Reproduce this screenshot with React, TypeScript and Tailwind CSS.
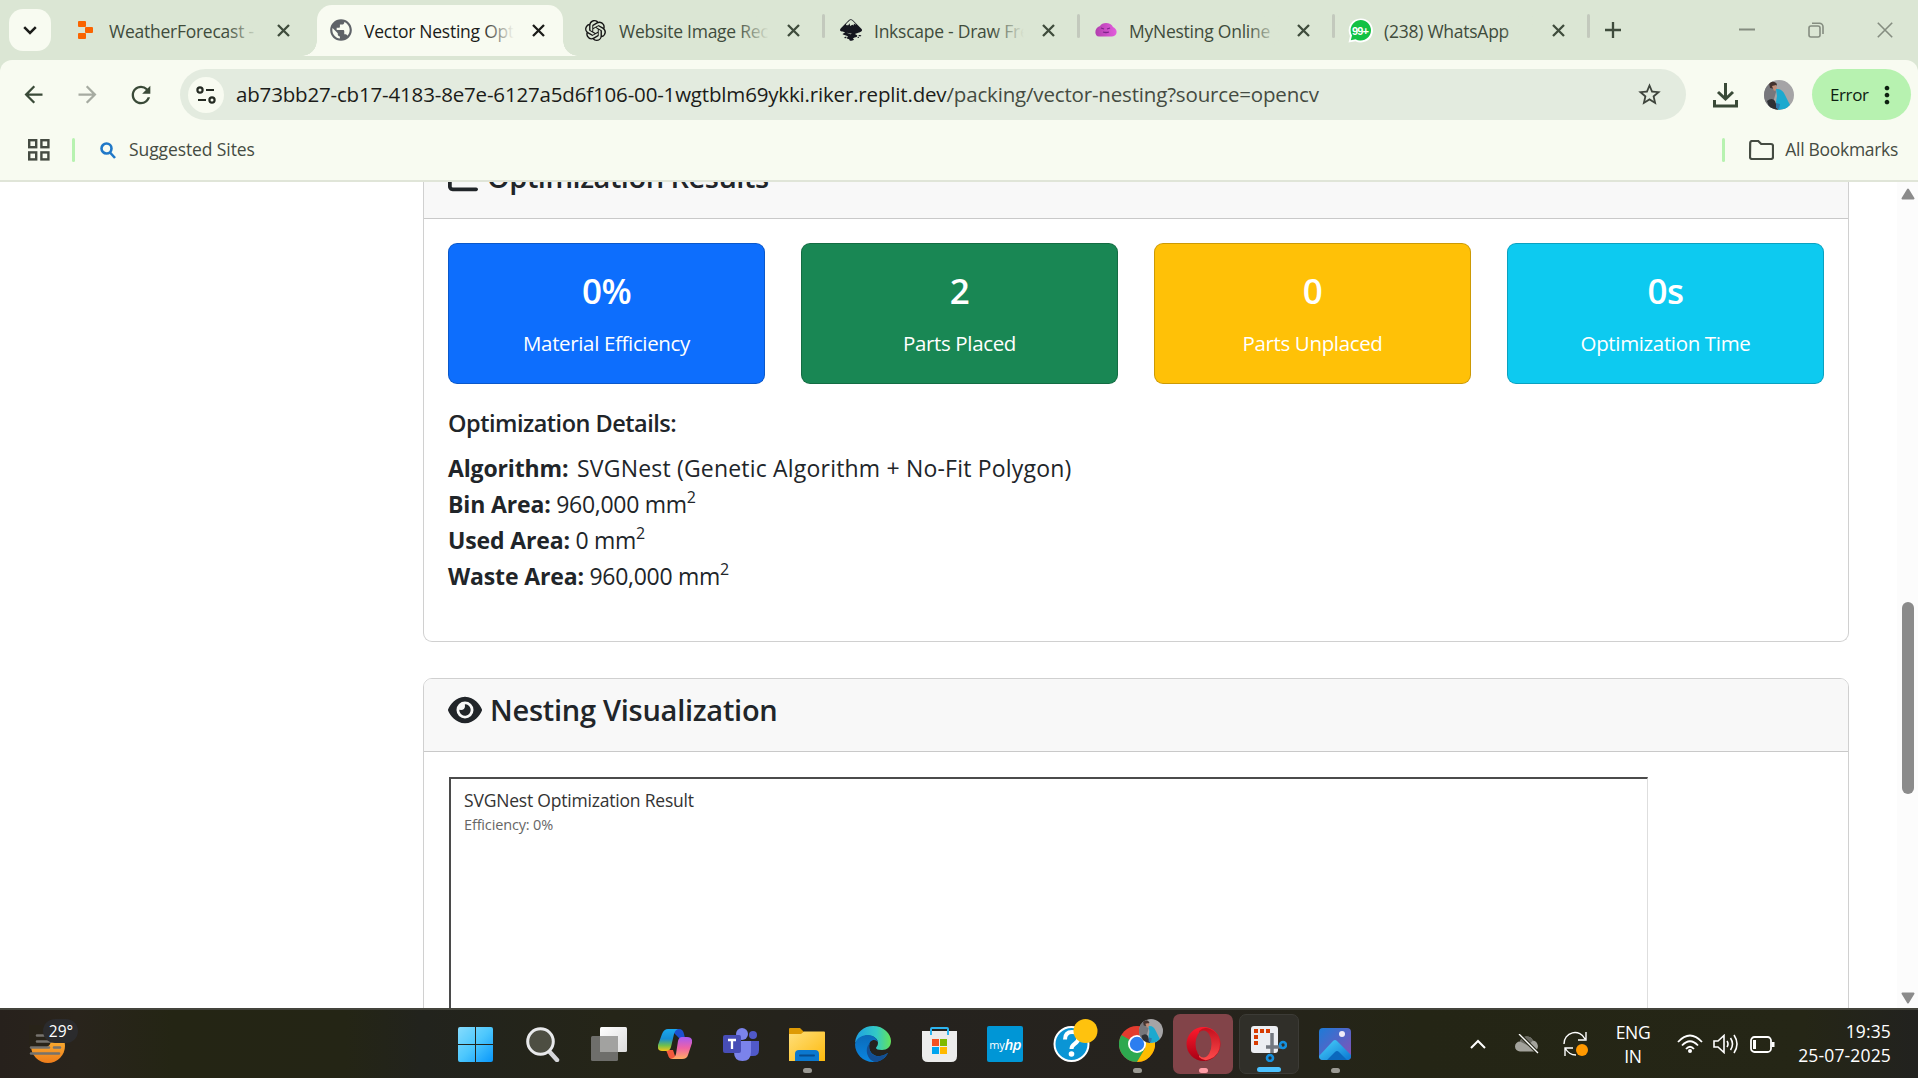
import React from "react";
import {
  MdArrowBack, MdArrowForward, MdRefresh, MdPublic, MdStarBorder, MdMoreVert,
} from "react-icons/md";
import { SiOpenai, SiInkscape } from "react-icons/si";
import { FaEye, FaChartLine } from "react-icons/fa6";

type Kids = { children?: React.ReactNode };

const Fade = ({ children, on }: Kids & { on: string }) => (
  <span className="relative ml-[12px] mt-[2px] block w-[150px] overflow-hidden whitespace-nowrap text-[17.5px] leading-[30px] tracking-[-0.25px]">
    {children}
    <span className={"absolute inset-y-0 right-0 w-[32px] bg-gradient-to-r from-transparent " + on} />
  </span>
);

function Tab({ icon, title, active, sep }: { icon: React.ReactNode; title: string; active?: boolean; sep?: boolean }) {
  return (
    <div className={"relative flex h-[51px] w-[255px] shrink-0 items-center pl-[21px] " + (active ? "text-[#1b1c19]" : "text-[#3f4c3c]")}>
      {active && (
        <>
          <span className="absolute inset-y-0 left-[9px] w-[246px] rounded-t-[15px] bg-[#f8fbf1]" />
          <span className="absolute bottom-0 left-[-6px] h-[15px] w-[15px] bg-[radial-gradient(circle_at_0_0,#dbe6d4_14.5px,#f8fbf1_15px)]" />
          <span className="absolute bottom-0 left-[255px] h-[15px] w-[15px] bg-[radial-gradient(circle_at_100%_0,#dbe6d4_14.5px,#f8fbf1_15px)]" />
        </>
      )}
      <span className="relative flex h-6 w-[23px] items-center justify-center">{icon}</span>
      <Fade on={active ? "to-[#f8fbf1]" : "to-[#dbe6d4]"}>{title}</Fade>
      <svg className="relative ml-[18px] shrink-0" width="13" height="13" viewBox="0 0 13 13"><path d="M1 1l11 11M12 1L1 12" stroke="currentColor" strokeWidth="2.300" /></svg>
      {sep && <span className="absolute left-[259px] top-[9px] h-6 w-[3px] rounded bg-[#c3c9bd]" />}
    </div>
  );
}

const Replit = () => (
  <svg width="16" height="18" viewBox="0 0 16 18" fill="#fa6400">
    <rect x="0" y="0" width="8" height="6" rx="1" /><rect x="7" y="6" width="8" height="6" rx="1" /><rect x="0" y="12" width="8" height="6" rx="1" />
  </svg>
);
const Blob = () => (
  <svg width="22" height="14" viewBox="0 0 22 14">
    <defs><linearGradient id="blob"><stop offset="0" stopColor="#b23fae" /><stop offset="1" stopColor="#e35ddd" /></linearGradient></defs>
    <path d="M5 3C7-1 16-1 18 4C23 6 23 13 17 13.500H4C-1 13-1 5 5 3Z" fill="url(#blob)" />
    <path d="M6 5l3 1M15 5l-3 1M8 9q3 1 6 0" stroke="#7d2589" strokeWidth="1.300" fill="none" />
  </svg>
);
const WhatsApp = () => (
  <svg width="25" height="25" viewBox="0 0 25 25" className="shrink-0">
    <path d="M12.500 .5a12 12 0 1 1-5 22.700L.5 24.500 2 18A12 12 0 0 1 12.500 .5Z" fill="#fff" />
    <path d="M12.500 2a10.300 10.300 0 1 1-5 19.200L2.800 22.200 4 17.500A10.300 10.300 0 0 1 12.500 2Z" fill="#12c143" />
    <text x="12.500" y="16.500" fontSize="11" fontWeight="700" fill="#fff" textAnchor="middle" fontFamily="Liberation Sans, sans-serif" textLength="17">99+</text>
  </svg>
);

const Portrait = ({ size, id }: { size: number; id: string }) => (
  <svg width={size} height={size} viewBox="0 0 30 30">
    <defs><clipPath id={id}><circle cx="15" cy="15" r="15" /></clipPath></defs>
    <g clipPath={"url(#" + id + ")"}>
      <rect width="30" height="30" fill="#a5a4a6" />
      <path d="M0 0h8l4 12-5 18H0Z" fill="#77777c" />
      <path d="M5 3q5-3 8 1l-2 5-5-1Z" fill="#44332f" /><path d="M8 6l4-1 1 4-3 2Z" fill="#c18f79" />
      <path d="M12 9q6-1 9 6l5 10-4 4-8 1-2-8 1-6Z" fill="#1ba9cf" />
      <path d="M3 21q5-4 8 0l3 9H6Z" fill="#2f3035" /><path d="M12 23l4 1-1 5-3-1Z" fill="#3177aa" />
    </g>
  </svg>
);

function Browser() {
  return (
    <header className="shrink-0 bg-[#dbe6d4]">
      <div className="flex h-[60px] items-start pt-[9px]">
        <div className="ml-[9px] mr-[2px] flex h-[42px] w-[42px] shrink-0 items-center justify-center rounded-[14px] bg-[#f8fbf1] text-[#1b1c19]">
          <svg width="14" height="9" viewBox="0 0 14 9" fill="none" stroke="currentColor" strokeWidth="2.500"><path d="M1.200 1.200L7 7l5.800-5.800" /></svg>
        </div>
        <div className="flex h-[42px] items-center">
          <div className="flex pt-0">
            <Tab icon={<Replit />} title="WeatherForecast - R" />
            <Tab active icon={<MdPublic size={26} color="#5f6368" className="shrink-0" />} title="Vector Nesting Optimizer" />
            <Tab sep icon={<SiOpenai size={21} color="#151515" />} title="Website Image Recreation" />
            <Tab sep icon={<SiInkscape size={22} color="#15161f" />} title="Inkscape - Draw Freely" />
            <Tab sep icon={<Blob />} title="MyNesting Online" />
            <Tab sep icon={<WhatsApp />} title="(238) WhatsApp" />
          </div>
          <svg className="ml-[22px] text-[#3f4c3c]" width="16" height="16" viewBox="0 0 16 16"><path d="M8 0v16M0 8h16" stroke="currentColor" strokeWidth="2.300" /></svg>
        </div>
        <div className="ml-auto mr-[25px] flex h-[42px] w-[154px] items-center justify-between text-[#858d80]">
          <svg width="16" height="16" viewBox="0 0 16 16"><path d="M0 7.500h16" stroke="currentColor" strokeWidth="2" /></svg>
          <svg width="16" height="16" viewBox="0 0 16 16" fill="none" stroke="currentColor" strokeWidth="1.600"><rect x="1" y="4" width="11" height="11" rx="2" /><path d="M4 1.200h7.500a3.500 3.500 0 0 1 3.500 3.500v7.300" /></svg>
          <svg width="16" height="16" viewBox="0 0 16 16" stroke="currentColor" strokeWidth="1.600"><path d="M.8.8l14.400 14.400M15.200.8L.8 15.200" /></svg>
        </div>
      </div>
      <div className="flex h-[60px] items-center rounded-t-[12px] bg-[#f8fbf1] pt-[9px] text-[#3a4a38]">
        <MdArrowBack size={27} className="ml-[20px]" />
        <MdArrowForward size={27} className="ml-[27px] text-[#a6aba1]" />
        <MdRefresh size={28} className="ml-[26px]" />
        <div className="ml-[25px] flex h-[51px] w-[1506px] items-center rounded-full bg-[#e3ebdf] pl-[8px] pr-[23px]">
          <div className="flex h-[36px] w-[36px] items-center justify-center rounded-full bg-[#f8fbf1]">
            <svg width="20" height="18" viewBox="0 0 20 18" fill="none" stroke="#252b23" strokeWidth="2.200"><circle cx="4" cy="4" r="2.600" /><path d="M10 4h8M2 14h8" /><circle cx="16" cy="14" r="2.600" /></svg>
          </div>
          <span className="mb-[2px] ml-[12px] whitespace-nowrap text-[20.5px] leading-[30px] tracking-[-0.17px] text-[#1b1c19]">ab73bb27-cb17-4183-8e7e-6127a5d6f106-00-1wgtblm69ykki.riker.replit.dev<span className="text-[#454b42]">/packing/vector-nesting?source=opencv</span></span>
          <MdStarBorder size={27} className="ml-auto text-[#3f453d]" />
        </div>
        <svg className="ml-[27px]" width="25" height="26" viewBox="0 0 25 26" fill="none" stroke="currentColor" strokeWidth="3"><path d="M12.500 1v16M5 10l7.500 7 7.500-7M1.500 18v6h22v-6" /></svg>
        <div className="ml-[26px]"><Portrait size={30} id="p1" /></div>
        <div className="ml-[18px] flex h-[51px] w-[99px] items-center rounded-full bg-[#b7f2b0] pl-[18px] text-[#0d2010]">
          <span className="w-[43px] text-[17px] tracking-[-0.4px]">Error</span>
          <MdMoreVert size={28} />
        </div>
      </div>
      <div className="flex h-[62px] items-center border-b-2 border-[#e0e5d8] bg-[#f8fbf1] text-[17.5px] leading-[24px] tracking-[-0.2px] text-[#454b42]">
        <svg className="ml-[28px]" width="22" height="22" viewBox="0 0 22 22" fill="none" stroke="#454b42" strokeWidth="2.400"><rect x="1.200" y="1.200" width="7" height="7" /><rect x="13.400" y="1.200" width="7" height="7" /><rect x="1.200" y="13.400" width="7" height="7" /><rect x="13.400" y="13.400" width="7" height="7" /></svg>
        <span className="ml-[22px] h-6 w-[3px] rounded bg-[#b7f2b0]" />
        <svg className="ml-[25px]" width="16" height="17" viewBox="0 0 16 17" fill="none" stroke="#2078c8" strokeWidth="2.600"><circle cx="6.500" cy="6.500" r="5" /><path d="M10 10.500l5 5.500" /></svg>
        <span className="mb-[2px] ml-[13px] tracking-[-0.1px]">Suggested Sites</span>
        <span className="ml-auto h-6 w-[3px] rounded bg-[#b7f2b0]" />
        <svg className="ml-[24px]" width="25" height="20" viewBox="0 0 25 20" fill="none" stroke="#454b42" strokeWidth="2.200"><path d="M1.200 3a2 2 0 0 1 2-2h6l3 3H22a2 2 0 0 1 2 2v11a2 2 0 0 1-2 2H3a2 2 0 0 1-2-2Z" /></svg>
        <span className="mb-[2px] ml-[11px] mr-[20px] tracking-[-0.3px]">All Bookmarks</span>
      </div>
    </header>
  );
}

function Stat({ value, label, tone }: { value: string; label: string; tone: string }) {
  return (
    <div className={"flex h-[141px] flex-col items-center rounded-[9px] border border-black/20 pt-[23px] text-white " + tone}>
      <div className="text-[35px] font-semibold leading-[48px] tracking-[-0.5px]">{value}</div>
      <div className="mt-[12px] text-[20.500px] leading-[32px] tracking-[-0.35px]">{label}</div>
    </div>
  );
}

const Detail = ({ name, children }: Kids & { name: string }) => (
  <div className="h-9 whitespace-nowrap"><strong className="font-bold tracking-[-0.15px]">{name}</strong> {children}</div>
);
const Sq = () => <sup className="relative top-[-0.6em] align-baseline text-[16px] leading-none">2</sup>;

function Page() {
  return (
    <main className="flex min-h-0 flex-1 bg-white text-[#212529]">
      <div className="ml-[423px] w-[1426px] shrink-0 overflow-hidden">
        <section className="h-[460px] rounded-b-[9px] border border-t-0 border-[#d0d0d0]">
          <div className="flex h-[37px] items-end border-b border-[#c9c9c9] bg-[#f8f8f8] pl-[24px]">
            <div className="flex h-[59px] shrink-0 items-start">
              <FaChartLine size={30} className="mt-[4px]" />
              <h5 className="ml-[9px] text-[29px] font-semibold leading-[36px] tracking-[-0.5px]">Optimization Results</h5>
            </div>
          </div>
          <div className="px-[24px] pt-[24px]">
            <div className="grid grid-cols-4 gap-[36px]">
              <Stat value="0%" label="Material Efficiency" tone="bg-[#0d6efd]" />
              <Stat value="2" label="Parts Placed" tone="bg-[#198754]" />
              <Stat value="0" label="Parts Unplaced" tone="bg-[#ffc107]" />
              <Stat value="0s" label="Optimization Time" tone="bg-[#0dcaf0]" />
            </div>
            <h6 className="mt-[24px] text-[23.500px] font-semibold leading-[30px] tracking-[-0.5px]">Optimization Details:</h6>
            <div className="mt-[12px] text-[23px] leading-[36px] tracking-[-0.3px]">
              <Detail name="Algorithm:"><span className="ml-[3px] tracking-[0.19px]">SVGNest (Genetic Algorithm + No-Fit Polygon)</span></Detail>
              <Detail name="Bin Area:">960,000 mm<Sq /></Detail>
              <Detail name="Used Area:">0 mm<Sq /></Detail>
              <Detail name="Waste Area:">960,000 mm<Sq /></Detail>
            </div>
          </div>
        </section>
        <section className="mt-[36px] h-[500px] overflow-hidden rounded-t-[9px] border border-[#d0d0d0]">
          <div className="flex h-[73px] items-start border-b border-[#c9c9c9] bg-[#f8f8f8] pl-[24px] pt-[12px]">
            <FaEye size={34} className="mt-[2px]" />
            <h5 className="ml-[8px] mt-[1px] text-[29px] font-semibold leading-[36px] tracking-[-0.27px]">Nesting Visualization</h5>
          </div>
          <div className="ml-[25px] mt-[25px] h-[420px] w-[1199px] border-l-2 border-r border-t-2 border-l-[#4b4b4b] border-r-[#dedede] border-t-[#4b4b4b] pl-[13px] pt-[8px]">
            <p className="text-[17.500px] leading-[26px] tracking-[-0.2px] text-[#333]">SVGNest Optimization Result</p>
            <p className="text-[14.500px] leading-[23px] tracking-[-0.15px] text-[#666]">Efficiency: 0%</p>
          </div>
        </section>
      </div>
      <div className="ml-auto flex w-[21px] flex-col items-center bg-[#fcfcfc] pl-[1px]">
        <svg className="mt-[6px]" width="14" height="12" viewBox="0 0 14 12"><path d="M7 1.500L12.500 10.500H1.500Z" fill="#8b8b8b" stroke="#8b8b8b" strokeWidth="2" strokeLinejoin="round" /></svg>
        <span className="mt-[402px] h-[192px] w-[12px] rounded-full bg-[#8b8b8b]" />
        <svg className="mb-[4px] mt-auto" width="14" height="12" viewBox="0 0 14 12"><path d="M7 10.500L12.500 1.500H1.500Z" fill="#8b8b8b" stroke="#8b8b8b" strokeWidth="2" strokeLinejoin="round" /></svg>
      </div>
    </main>
  );
}

function AppButton({ children, box, mark }: Kids & { box?: string; mark?: string }) {
  return (
    <div className={"relative flex h-[60px] w-[60px] shrink-0 items-center justify-center rounded-[7px] " + (box ?? "")}>
      {children}
      {mark && <span className={"absolute bottom-[1px] h-[5px] rounded-full " + mark} />}
    </div>
  );
}

function Taskbar() {
  const dot = "w-[9px] bg-[#9b9a94]";
  return (
    <footer className="flex h-[70px] shrink-0 items-center border-t-2 border-[#44443c] bg-[linear-gradient(90deg,#27211c_0%,#29241c_4%,#242514_9%,#242515_18%,#22231d_22%,#252518_32%,#25221e_45%,#26231e_62%,#242515_74%,#252616_94%,#22221f_100%)] text-white">
      <svg className="ml-[26px] shrink-0" width="58" height="50" viewBox="0 0 58 50">
        <defs><linearGradient id="sun" x2="0" y2="1"><stop offset="0" stopColor="#ffc43c" /><stop offset="1" stopColor="#ee7d1b" /></linearGradient></defs>
        <circle cx="22" cy="27" r="17" fill="url(#sun)" />
        <path d="M3 6h36v17H25q-2 6-9 6l-13-1Z" fill="#282319" />
        <path d="M11 16.500h7M11 22.500h14M5 28.500h18M28 28.500h6M5 34.500h28" stroke="#76736e" strokeWidth="2.600" strokeLinecap="round" />
        <rect x="17" y="0" width="35" height="24" rx="12" fill="#2b2b2d" />
        <text x="35" y="17.500" fontSize="15.500" fill="#fff" textAnchor="middle">29°</text>
      </svg>
      <div className="ml-[361px] flex gap-[6px]">
        <div className="mr-[2px]">
          <AppButton>
            <svg width="35" height="35" viewBox="0 0 35 35"><defs><linearGradient id="win" x2="1" y2="1"><stop offset="0" stopColor="#86dcfd" /><stop offset=".5" stopColor="#4cc7fd" /><stop offset="1" stopColor="#0997fa" /></linearGradient></defs><path fill="url(#win)" d="M2 0h15v17H0V2q0-2 2-2ZM18 0h15q2 0 2 2v15H18ZM0 18h17v17H2q-2 0-2-2ZM18 18h17v15q0 2-2 2H18Z" /></svg>
          </AppButton>
        </div>
        <AppButton>
          <svg width="34" height="35" viewBox="0 0 34 35"><path d="M22 23l9 10" stroke="#d5d6da" strokeWidth="4.500" strokeLinecap="round" /><circle cx="14.500" cy="14.500" r="12.800" fill="#4d4e42" stroke="#e8e9eb" strokeWidth="3" /></svg>
        </AppButton>
        <AppButton>
          <svg width="36" height="34" viewBox="0 0 36 34"><defs><linearGradient id="tv" x2="1" y2="1"><stop offset="0" stopColor="#fff" /><stop offset="1" stopColor="#dcdcdc" /></linearGradient></defs><rect x="9" y="0" width="27" height="25" rx="1.500" fill="url(#tv)" /><rect x="0" y="9" width="27" height="25" rx="1.500" fill="#6e6e6b" /><path d="M9 9h18v16H9Z" fill="#a2a2a0" /></svg>
        </AppButton>
        <AppButton>
          <svg width="34" height="31" viewBox="0 0 34 31">
            <defs>
              <linearGradient id="c1" x2="0" y2="1"><stop offset="0" stopColor="#18a8f0" /><stop offset=".45" stopColor="#168ed4" /><stop offset=".75" stopColor="#70bf4d" /><stop offset="1" stopColor="#f5c51a" /></linearGradient>
              <linearGradient id="c2" x2="0" y2="1"><stop offset="0" stopColor="#a85af4" /><stop offset=".5" stopColor="#ef62a5" /><stop offset="1" stopColor="#ffac62" /></linearGradient>
            </defs>
            <path d="M10 0h11q4 0 5 5l1 4h-6L16 4Z" fill="#1c4fd0" /><path d="M8 21h7l3 9h-4q-3 0-4-4Z" fill="#f25a3d" />
            <path d="M10 0h10q-3 1-4 5l-3 13q-1 4-5 4H4q-5 0-4-6L4 5Q6 0 10 0Z" fill="url(#c1)" />
            <path d="M24 8h5q6 0 5 6l-4 12q-1 4-6 4H13q4-1 5-5l2-13q1-4 4-4Z" fill="url(#c2)" />
          </svg>
        </AppButton>
        <AppButton>
          <svg width="36" height="33" viewBox="0 0 36 33"><circle cx="30" cy="7" r="4" fill="#5059c9" /><path d="M26 13h10v9q0 6-6 6h-4Z" fill="#5059c9" /><circle cx="19" cy="6" r="6" fill="#7b83eb" /><path d="M11 13h17v11q0 9-8.500 9T11 24Z" fill="#7b83eb" /><rect x="0" y="7" width="18" height="18" rx="2" fill="#474db6" /><path d="M5 12h8M9 12v9" stroke="#fff" strokeWidth="2.300" /></svg>
        </AppButton>
        <AppButton mark={dot}>
          <svg width="36" height="33" viewBox="0 0 36 33"><defs><linearGradient id="fo" x2="1" y2="1"><stop offset="0" stopColor="#ffdf7b" /><stop offset="1" stopColor="#fdba0d" /></linearGradient></defs><path d="M0 1q0-1 1-1h10l4 4v4H0Z" fill="#de9a05" /><path d="M0 6h12l3-2.500h20q1 0 1 1V33H0Z" fill="url(#fo)" /><path d="M6 33v-7q0-4 4-4h16q4 0 4 4v7Z" fill="#0b78cf" /><path d="M11 27.500h14" stroke="#074c8e" strokeWidth="2" strokeLinecap="round" /></svg>
        </AppButton>
        <AppButton>
          <svg width="36" height="36" viewBox="0 0 36 36">
            <defs><linearGradient id="e1"><stop offset="0" stopColor="#1d9fe4" /><stop offset=".6" stopColor="#33c9c5" /><stop offset="1" stopColor="#64e35a" /></linearGradient><linearGradient id="e2" x2="0" y2="1"><stop offset="0" stopColor="#0b6ab9" /><stop offset="1" stopColor="#0a86e0" /></linearGradient></defs>
            <path d="M0 17C1 6 9 0 18 0c11 0 18 8 18 15 0 6-4 9-9 9-4 0-6-1-6-2 0-1 2-2 2-5C23 9 8 5 0 17Z" fill="url(#e1)" />
            <path d="M0 18C2 11 8 9 13 9c6 0 9 4 10 7-3-4-9-2-9 4 0 7 6 11 11 10 4 0 7-3 8-3C30 33 24 36 18 36 8 36 0 28 0 18Z" fill="url(#e2)" />
            <path d="M15 17c-3 9 4 14 10 13 4 0 7-3 8-3-4 7-10 9-13 9-8-2-11-14-5-19Z" fill="#134e93" />
          </svg>
        </AppButton>
        <AppButton>
          <svg width="35" height="35" viewBox="0 0 35 35"><path d="M0 4h35v25q0 6-6 6H6q-6 0-6-6Z" fill="#ececec" /><path d="M9 8V2q0-1 1-1h15q1 0 1 1v6" fill="none" stroke="#2db4ef" strokeWidth="2" /><path d="M10 12h7v7h-7Z" fill="#f25022" /><path d="M18 12h7v7h-7Z" fill="#7fba00" /><path d="M10 20h7v7h-7Z" fill="#00a4ef" /><path d="M18 20h7v7h-7Z" fill="#ffb900" /></svg>
        </AppButton>
        <AppButton>
          <div className="flex h-[36px] w-[36px] items-center justify-center rounded-[2px] bg-[#0096d6] text-[11px] leading-none tracking-[-0.2px]">my<span className="text-[15px] font-semibold italic tracking-[-0.8px]">hp</span></div>
        </AppButton>
        <AppButton>
          <svg className="-mt-[7px] ml-[8px]" width="45" height="44" viewBox="0 0 45 44"><circle cx="18.500" cy="25" r="17" fill="#0a95d5" stroke="#fff" strokeWidth="2" /><path d="M12 20.500q0-7.500 7-7.500t6.500 6q0 3.500-4 6-3 2-3 5" stroke="#fff" strokeWidth="4" fill="none" /><circle cx="18.500" cy="35" r="2.800" fill="#fff" /><circle cx="32.500" cy="12" r="12" fill="#ffc20e" /></svg>
        </AppButton>
        <AppButton mark={dot}>
          <svg width="36" height="36" viewBox="0 0 36 36"><circle cx="18" cy="18" r="18" fill="#e33b2e" /><path d="M18 18L2.400 9A18 18 0 0 0 18 36l8-13Z" fill="#2da94f" /><path d="M18 36l8-13.500L24 9h9.600A18 18 0 0 1 18 36Z" fill="#fdbd00" /><circle cx="18" cy="18" r="9" fill="#fff" /><circle cx="18" cy="18" r="7.200" fill="#2c7ef0" /></svg>
          <span className="absolute right-[4px] top-[5px]"><Portrait size={24} id="p2" /></span>
        </AppButton>
        <AppButton box="bg-[#824449]" mark="w-[9px] bg-[#ff9da6]">
          <svg width="35" height="34" viewBox="0 0 35 34"><defs><linearGradient id="op" x2="0" y2="1"><stop offset="0" stopColor="#ff1b2d" /><stop offset="1" stopColor="#a70014" /></linearGradient><linearGradient id="op2" x2="0" y2="1"><stop offset="0" stopColor="#c3101e" /><stop offset="1" stopColor="#ff4b4b" /></linearGradient></defs><ellipse cx="17.500" cy="17" rx="17" ry="17" fill="url(#op)" /><path d="M13 4q5-5 11-2 10 4 10 15T24 32q-6 3-11-2Z" fill="url(#op2)" /><ellipse cx="17.500" cy="17" rx="8" ry="13.500" fill="#824449" /></svg>
        </AppButton>
        <AppButton box="border border-[#3c3b36] bg-[#302f29]" mark="w-[24px] bg-[#4cc2ff]">
          <svg width="36" height="36" viewBox="0 0 36 36"><rect x="0" y="0" width="27" height="27" rx="3" fill="#eceef2" /><path d="M5 19V5h14" fill="none" stroke="#d83b01" strokeWidth="4" strokeDasharray="4 2" /><path d="M21 7v20M15 21h16" stroke="#737880" strokeWidth="3.500" /><circle cx="32" cy="19" r="3" fill="none" stroke="#1490df" strokeWidth="2.600" /><circle cx="19" cy="32" r="3" fill="none" stroke="#1490df" strokeWidth="2.600" /></svg>
        </AppButton>
        <AppButton mark={dot}>
          <svg width="32" height="32" viewBox="0 0 32 32"><defs><linearGradient id="ph" x2="1" y2="1"><stop offset="0" stopColor="#1c7bd8" /><stop offset="1" stopColor="#8a4fb5" /></linearGradient><linearGradient id="ph2" x2="1" y2="1"><stop offset="0" stopColor="#4bd3fc" /><stop offset="1" stopColor="#0a77d2" /></linearGradient><clipPath id="phc"><rect width="32" height="32" rx="4" /></clipPath></defs><g clipPath="url(#phc)"><rect width="32" height="32" fill="url(#ph)" /><path d="M0 28L14 13q2-2 4 0l14 14v5H0Z" fill="url(#ph2)" /><path d="M8 32l8-8q2-2 4 0l8 8Z" fill="#0b68bd" /></g><circle cx="23" cy="6" r="3" fill="#f0ecf8" /></svg>
        </AppButton>
      </div>
      <div className="ml-auto flex shrink-0 items-center pr-[27px] text-[17.5px] leading-[24px]">
        <svg width="16" height="10" viewBox="0 0 16 10" fill="none" stroke="#fff" strokeWidth="2"><path d="M1 9l7-7 7 7" /></svg>
        <svg className="ml-[29px]" width="25" height="20" viewBox="0 0 25 20"><path d="M5 17.500a5 5 0 0 1 0-10 7 7 0 0 1 13-1 6 6 0 0 1 2 11Z" fill="#a3a39c" /><path d="M5 7.500a7 7 0 0 1 13-1l-5 5Z" fill="#6b6b63" /><path d="M4 0l19 19" stroke="#252616" strokeWidth="3.500" /><path d="M4 0l19 19" stroke="#fff" strokeWidth="1.300" /></svg>
        <svg className="ml-[23px]" width="26" height="26" viewBox="0 0 26 26" fill="none" stroke="#fff" strokeWidth="1.400"><path d="M1 13A11 11 0 0 1 22 8M23 1v8h-8M2 25v-8h8M2 17q4 7 11 7" /><circle cx="19" cy="19" r="6" fill="#ff9800" stroke="none" /></svg>
        <div className="ml-[23px] w-[42px] text-center tracking-[-0.4px]">ENG<br />IN</div>
        <svg className="ml-[23px]" width="26" height="20" viewBox="0 0 26 20" fill="none" stroke="#fff" strokeWidth="1.800"><path d="M1 8Q13-5 25 8M5 11.500q8-8.500 16 0M9 15q4-4.500 8 0" /><circle cx="13" cy="17" r="2" fill="#fff" stroke="none" /></svg>
        <svg className="ml-[10px]" width="26" height="20" viewBox="0 0 26 20" fill="none" stroke="#fff" strokeWidth="1.600"><path d="M1 7h4l6-5.500v17L5 13H1ZM14 7q2 3 0 6M17.500 4q4 6 0 12M21 1q6 9 0 18" /></svg>
        <svg className="ml-[11px]" width="25" height="17" viewBox="0 0 25 17" fill="none" stroke="#fff" strokeWidth="1.800"><rect x="1" y="1" width="20" height="15" rx="3.500" /><path d="M4.500 4v9" strokeWidth="3" /><path d="M23 6v5" strokeWidth="3" /></svg>
        <div className="-mt-[2px] ml-[22px] w-[94px] whitespace-nowrap text-right tracking-[0.15px]">19:35<br />25-07-2025</div>
      </div>
    </footer>
  );
}

export default function App() {
  return (
    <div className="flex h-[1078px] w-[1918px] flex-col overflow-hidden font-['Open_Sans','Noto_Sans',sans-serif]">
      <Browser />
      <Page />
      <Taskbar />
    </div>
  );
}
